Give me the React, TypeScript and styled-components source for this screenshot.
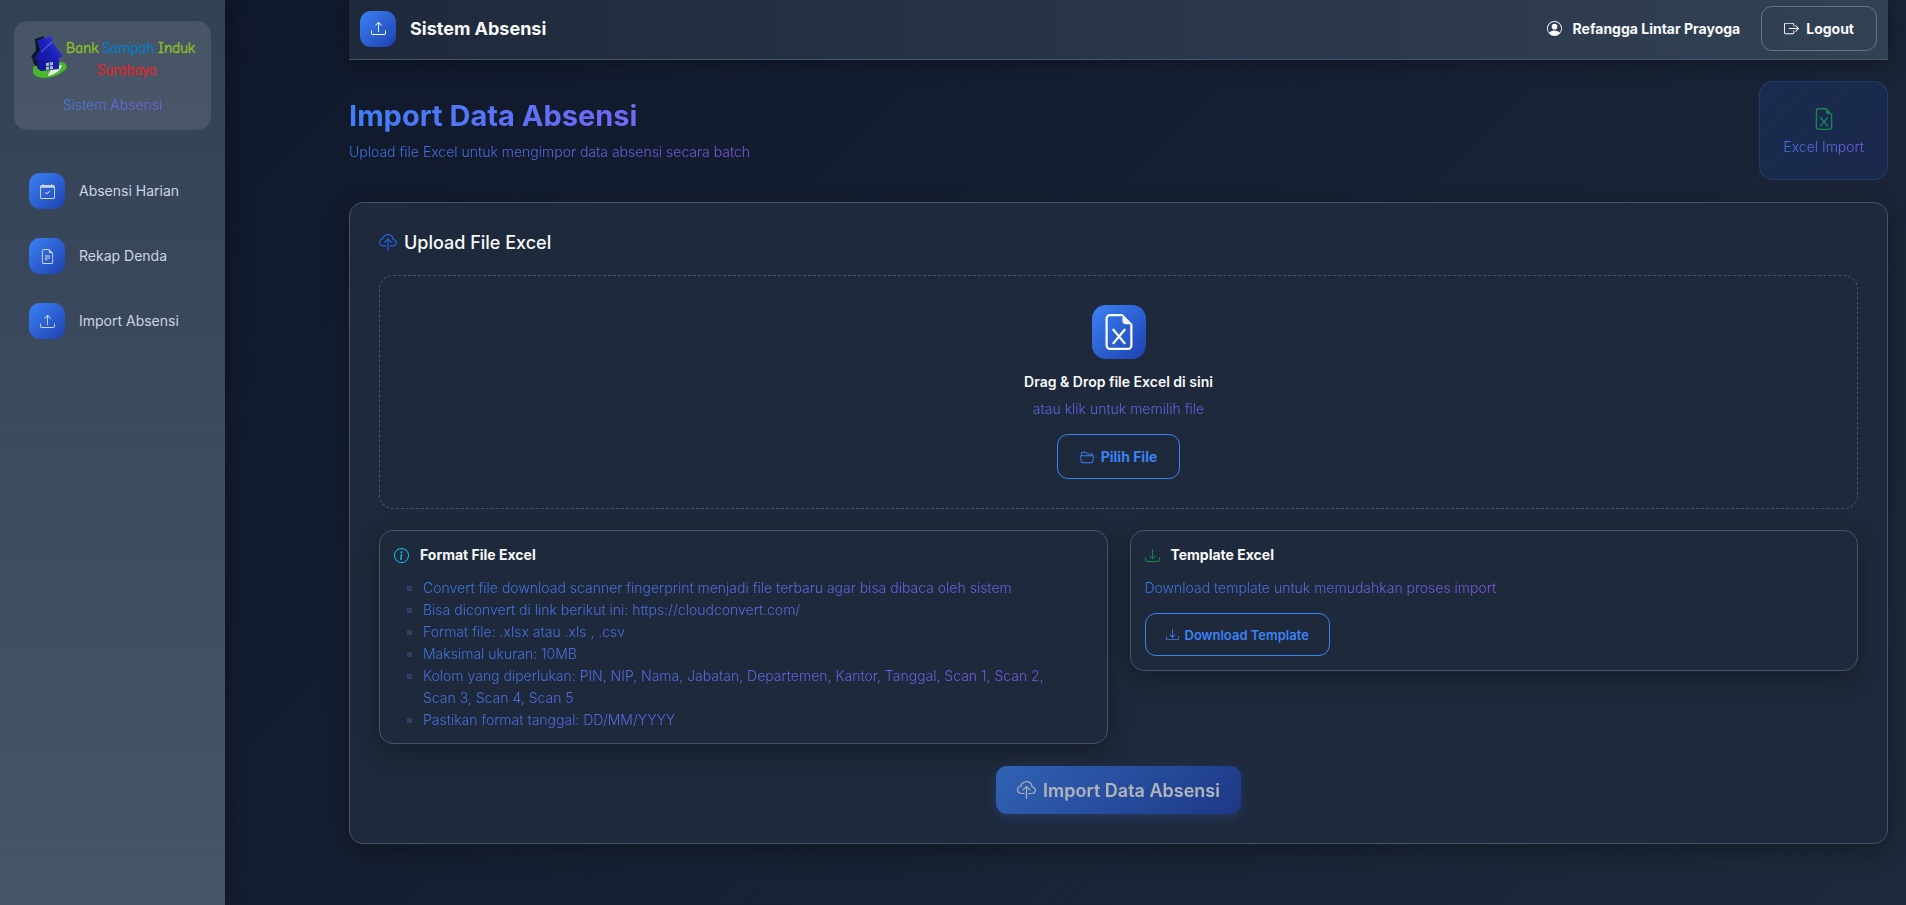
import React from "react";
import styled, { createGlobalStyle, css } from "styled-components";
import {
  BsBoxArrowRight,
  BsCalendarCheck,
  BsCloudUpload,
  BsDownload,
  BsFileEarmarkExcel,
  BsFileEarmarkText,
  BsFolder2Open,
  BsInfoCircle,
  BsPersonCircle,
  BsUpload,
} from "react-icons/bs";

const GlobalStyle = createGlobalStyle`
  *, *::before, *::after { box-sizing: border-box; }
  body {
    margin: 0;
    background: #0f172a;
    color: #f8fafc;
    font-family: Inter, "Liberation Sans", sans-serif;
    font-size: 14px;
    line-height: 22px;
  }
  h1, h2, h3, p, ul { margin: 0; }
  button { font-family: inherit; cursor: pointer; }
  svg { display: block; flex: none; }
`;

const accentText = css`
  background: linear-gradient(135deg, #3b82f6, #8b5cf6);
  background-clip: text;
  -webkit-background-clip: text;
  color: transparent;
`;

const Shell = styled.div`
  display: flex;
  min-height: 100vh;
  background: linear-gradient(135deg, #0f172a 0%, #1e293b 100%);
`;

const Sidebar = styled.aside`
  flex: none;
  width: 225px;
  padding: 21px 14px;
  background: linear-gradient(180deg, #334155 0%, #475569 100%);
  box-shadow: 4px 0 18px rgba(0, 0, 0, 0.3);
`;

const Brand = styled.div`
  display: flex;
  flex-direction: column;
  align-items: center;
  gap: 14px;
  height: 109px;
  padding-top: 13px;
  border-radius: 14px;
  background: rgba(255, 255, 255, 0.1);
`;

const MutedText = styled.p`
  ${accentText}
  font-weight: 300;
  opacity: 0.9;
`;

const Menu = styled.nav`
  display: flex;
  flex-direction: column;
  gap: 29px;
  margin-top: 43px;
  padding-left: 15px;
`;

const MenuLink = styled.a`
  display: flex;
  align-items: center;
  gap: 14px;
  color: #cbd5e1;
  text-decoration: none;
`;

const IconTile = styled.span<{ $large?: boolean }>`
  display: flex;
  align-items: center;
  justify-content: center;
  flex: none;
  width: ${({ $large }) => ($large ? 54 : 36)}px;
  height: ${({ $large }) => ($large ? 54 : 36)}px;
  border-radius: ${({ $large }) => ($large ? 14 : 11)}px;
  background: linear-gradient(135deg, #3b82f6, #1e40af);
`;

const Main = styled.main`
  flex: 1;
  min-width: 0;
  padding: 0 18px 60px 124px;
`;

const Topbar = styled.header`
  display: flex;
  align-items: center;
  justify-content: space-between;
  height: 60px;
  padding: 0 11px 2px;
  border-bottom: 1px solid #475569;
  background: linear-gradient(90deg, #1e293b 0%, #334155 100%);
  box-shadow: 0 4px 18px rgba(0, 0, 0, 0.3);
`;

const TopGroup = styled.div<{ $gap: number }>`
  display: flex;
  align-items: center;
  gap: ${({ $gap }) => $gap}px;
`;

const AppName = styled.span`
  font-size: 18px;
  font-weight: 700;
`;

const UserName = styled.span`
  display: flex;
  align-items: center;
  gap: 11px;
  font-weight: 700;
`;

const Button = styled.button<{ $tone: "light" | "blue"; $compact?: boolean }>`
  display: inline-flex;
  align-items: center;
  gap: ${({ $compact }) => ($compact ? 6 : 7)}px;
  height: ${({ $compact }) => ($compact ? 43 : 45)}px;
  padding: 0 ${({ $compact }) => ($compact ? 20 : 22)}px;
  border: 1px solid ${({ $tone }) => ($tone === "light" ? "#64748b" : "#3b82f6")};
  border-radius: 11px;
  background: transparent;
  color: ${({ $tone }) => ($tone === "light" ? "#f8fafc" : "#3b82f6")};
  font-size: ${({ $compact }) => ($compact ? 13 : 14)}px;
  font-weight: ${({ $compact }) => ($compact ? 600 : 700)};
`;

const PageHead = styled.div`
  display: flex;
  align-items: center;
  justify-content: space-between;
  margin: 21px 0 22px;
`;

const PageTitle = styled.h1`
  ${accentText}
  margin-bottom: 8px;
  font-size: 29px;
  font-weight: 700;
  line-height: 35px;
`;

const Badge = styled.div`
  display: flex;
  flex-direction: column;
  align-items: center;
  gap: 6px;
  padding: 26px 23px 21px;
  border: 1px solid rgba(59, 130, 246, 0.2);
  border-radius: 14px;
  background: linear-gradient(135deg, rgba(37, 99, 235, 0.14), rgba(30, 64, 175, 0.18));
  color: #198754;
`;

const Panel = styled.section`
  padding: 29px;
  border: 1px solid #475569;
  border-radius: 14px;
  background: #1e293b;
  box-shadow: 0 8px 24px rgba(0, 0, 0, 0.3);
`;

const PanelTitle = styled.h2`
  display: flex;
  align-items: center;
  gap: 7px;
  margin-bottom: 21px;
  font-size: 18px;
  font-weight: 500;
  line-height: 22px;

  svg { color: #2563eb; }
`;

const DropZone = styled.div`
  display: flex;
  flex-direction: column;
  align-items: center;
  padding: 29px;
  border: 1px dashed #475569;
  border-radius: 14px;
`;

const DropTitle = styled.h3`
  margin: 12px 0 5px;
  font-size: 14px;
  font-weight: 600;
`;

const DropHint = styled(MutedText)`
  align-self: stretch;
  margin-bottom: 14px;
  text-align: center;
`;

const CardRow = styled.div`
  display: grid;
  grid-template-columns: 1fr 1fr;
  align-items: start;
  gap: 22px;
  margin: 21px 0 22px;
`;

const Card = styled.section`
  padding: 14px 14px 12px;
  border: 1px solid #475569;
  border-radius: 14px;
  background: #1e293b;
  box-shadow: 0 8px 24px rgba(0, 0, 0, 0.3);
`;

const CardTitle = styled.h3<{ $icon: string }>`
  display: flex;
  align-items: center;
  gap: 11px;
  margin-bottom: 12px;
  font-size: 14px;
  font-weight: 700;
  line-height: 20px;

  svg { color: ${({ $icon }) => $icon}; }
`;

const Rules = styled.ul`
  padding: 0 29px;
  font-weight: 300;
  ${accentText}
  opacity: 0.9;

  li::marker { color: #2f4163; }
`;

const TemplateHint = styled(MutedText)`
  width: fit-content;
  margin-bottom: 14px;
`;

const TemplateAction = styled.div`
  display: flex;
  padding-bottom: 2px;
`;

const Actions = styled.div`
  display: flex;
  justify-content: center;
`;

const SubmitButton = styled.button`
  display: flex;
  align-items: center;
  gap: 7px;
  height: 48px;
  padding: 0 21px;
  border: 0;
  border-radius: 11px;
  background: linear-gradient(135deg, #3b82f6, #1e40af);
  box-shadow: 0 4px 14px rgba(59, 130, 246, 0.3);
  color: #fff;
  font-size: 18px;
  font-weight: 600;
  opacity: 0.65;
`;

const LogoSvg = styled.svg`
  overflow: visible;
  font-family: "Comic Neue", "Comic Sans MS", cursive, sans-serif;
  font-weight: 400;
`;

const Logo = () => (
  <LogoSvg width="170" height="46" viewBox="0 0 170 46" role="img" aria-label="Bank Sampah Induk Surabaya">
    <defs>
      <linearGradient id="wall" x1="0" y1="1" x2="1" y2="0">
        <stop offset="0" stopColor="#10108c" />
        <stop offset="0.6" stopColor="#1b22b8" />
        <stop offset="1" stopColor="#4252dc" />
      </linearGradient>
    </defs>
    <path d="M6 32c-3 7 0 11 9 12 11 0 21-5 24-11-1-5-6-6-10-4z" fill="#49b62c" />
    <path d="M20 42c1-6 6-9 14-11-1 5-6 9-14 11z" fill="#e4f3df" />
    <path d="M7 5l9-3-1 4-5 20-6 3 4-5-5-1 5-7z" fill="#0c1520" />
    <path d="M4 24l5-5 2 12-4 1z" fill="#101828" />
    <path d="M9 6l14-4 2 4-1 2 11 14-4 2v11l-18 2-4-3 1-8-4-1 6-9z" fill="url(#wall)" />
    <path d="M24 8L13 18" stroke="#6c7cf0" strokeWidth="1" />
    <path d="M18 29l7-1v7l-7 1z" fill="#aebbc8" />
    <path d="M21.500 28.500v7M18 32.500l7-1" stroke="#25309c" strokeWidth="1" />
    <g fontSize="15" strokeWidth="0.5">
      <text x="38" y="19" fill="#87bd27" stroke="#87bd27">Bank</text>
      <text x="74" y="19" fill="#0878bd" stroke="#0878bd">Sampah</text>
      <text x="130" y="19" fill="#87bd27" stroke="#87bd27">Induk</text>
      <text x="69" y="41" fill="#d9282b" stroke="#d9282b">Surabaya</text>
    </g>
  </LogoSvg>
);

const menu = [
  { label: "Absensi Harian", Icon: BsCalendarCheck },
  { label: "Rekap Denda", Icon: BsFileEarmarkText },
  { label: "Import Absensi", Icon: BsUpload },
];

const rules = [
  "Convert file download scanner fingerprint menjadi file terbaru agar bisa dibaca oleh sistem",
  "Bisa diconvert di link berikut ini: https://cloudconvert.com/",
  "Format file: .xlsx atau .xls , .csv",
  "Maksimal ukuran: 10MB",
  "Kolom yang diperlukan: PIN, NIP, Nama, Jabatan, Departemen, Kantor, Tanggal, Scan 1, Scan 2, Scan 3, Scan 4, Scan 5",
  "Pastikan format tanggal: DD/MM/YYYY",
];

export default function App() {
  return (
    <>
      <GlobalStyle />
      <Shell>
        <Sidebar>
          <Brand>
            <Logo />
            <MutedText>Sistem Absensi</MutedText>
          </Brand>
          <Menu>
            {menu.map(({ label, Icon }) => (
              <MenuLink href="#" key={label}>
                <IconTile>
                  <Icon size={15} />
                </IconTile>
                {label}
              </MenuLink>
            ))}
          </Menu>
        </Sidebar>
        <Main>
          <Topbar>
            <TopGroup $gap={14}>
              <IconTile>
                <BsUpload size={15} />
              </IconTile>
              <AppName>Sistem Absensi</AppName>
            </TopGroup>
            <TopGroup $gap={21}>
              <UserName>
                <BsPersonCircle size={15} />
                Refangga Lintar Prayoga
              </UserName>
              <Button type="button" $tone="light">
                <BsBoxArrowRight size={15} />
                Logout
              </Button>
            </TopGroup>
          </Topbar>

          <PageHead>
            <div>
              <PageTitle>Import Data Absensi</PageTitle>
              <MutedText>Upload file Excel untuk mengimpor data absensi secara batch</MutedText>
            </div>
            <Badge>
              <BsFileEarmarkExcel size={22} />
              <MutedText>Excel Import</MutedText>
            </Badge>
          </PageHead>

          <Panel>
            <PanelTitle>
              <BsCloudUpload size={18} />
              Upload File Excel
            </PanelTitle>
            <DropZone>
              <IconTile $large>
                <BsFileEarmarkExcel size={36} />
              </IconTile>
              <DropTitle>Drag &amp; Drop file Excel di sini</DropTitle>
              <DropHint>atau klik untuk memilih file</DropHint>
              <Button type="button" $tone="blue">
                <BsFolder2Open size={14} />
                Pilih File
              </Button>
            </DropZone>
            <CardRow>
              <Card>
                <CardTitle $icon="#0dcaf0">
                  <BsInfoCircle size={15} />
                  Format File Excel
                </CardTitle>
                <Rules>
                  {rules.map((rule) => (
                    <li key={rule}>{rule}</li>
                  ))}
                </Rules>
              </Card>
              <Card>
                <CardTitle $icon="#198754">
                  <BsDownload size={15} />
                  Template Excel
                </CardTitle>
                <TemplateHint>Download template untuk memudahkan proses import</TemplateHint>
                <TemplateAction>
                  <Button type="button" $tone="blue" $compact>
                    <BsDownload size={13} />
                    Download Template
                  </Button>
                </TemplateAction>
              </Card>
            </CardRow>
            <Actions>
              <SubmitButton type="button">
                <BsCloudUpload size={19} />
                Import Data Absensi
              </SubmitButton>
            </Actions>
          </Panel>
        </Main>
      </Shell>
    </>
  );
}
